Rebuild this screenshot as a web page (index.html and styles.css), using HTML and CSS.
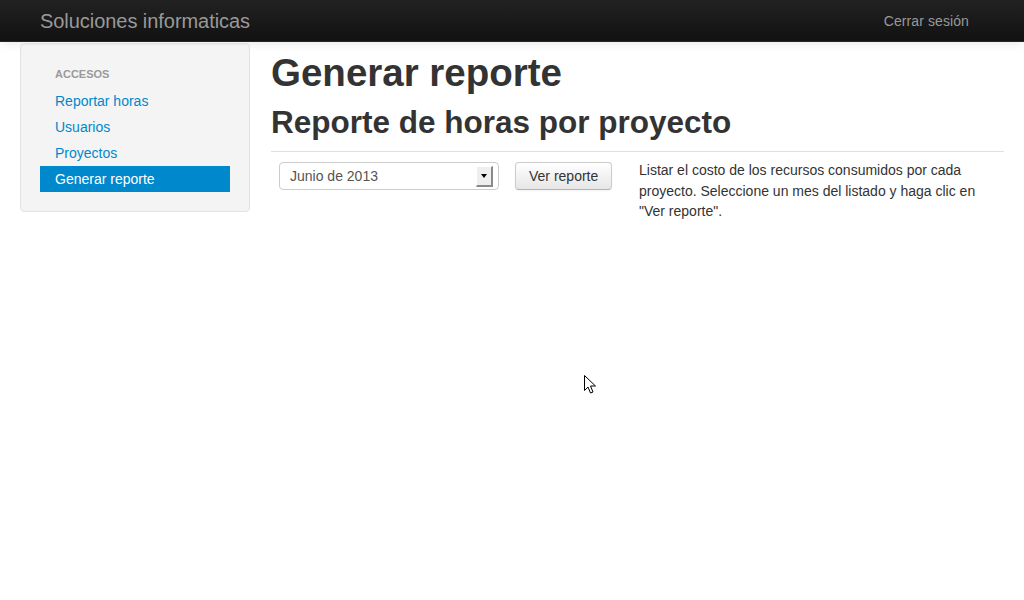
FILE: index.html
```html
<!DOCTYPE html>
<html lang="es">
<head>
<meta charset="utf-8">
<title>Generar reporte</title>
<link rel="stylesheet" href="styles.css">
</head>
<body>
<div class="navbar">
  <a class="brand" href="#">Soluciones informaticas</a>
  <a class="logout" href="#">Cerrar sesión</a>
</div>
<div class="layout">
  <aside class="well">
    <ul class="nav-list">
      <li class="nav-header">Accesos</li>
      <li><a href="#">Reportar horas</a></li>
      <li><a href="#">Usuarios</a></li>
      <li><a href="#">Proyectos</a></li>
      <li class="active"><a href="#">Generar reporte</a></li>
    </ul>
  </aside>
  <main class="content">
    <h1>Generar reporte</h1>
    <h2>Reporte de horas por proyecto</h2>
    <hr class="rule">
    <div class="report-row">
      <form class="report-form">
        <div class="select">
          <span class="select-text">Junio de 2013</span>
          <span class="select-arrow"><span class="tri"></span></span>
        </div>
        <button type="button" class="btn">Ver reporte</button>
      </form>
      <p class="help">Listar el costo de los recursos consumidos por cada proyecto. Seleccione un mes del listado y haga clic en "Ver reporte".</p>
    </div>
  </main>
</div>
<svg class="cursor" width="13" height="20" viewBox="0 0 13 20"><path d="M0.5 0.5 L0.5 15.5 L4 12 L6.5 18 L9 17 L6.5 11 L11.5 11 Z" fill="#fff" stroke="#000" stroke-width="1"/></svg>
</body>
</html>
```
FILE: styles.css
```css
* { box-sizing: border-box; }
html, body { margin: 0; padding: 0; }
body {
  font-family: "Liberation Sans", Arial, sans-serif;
  font-size: 14px;
  line-height: 20px;
  color: #333;
  background: #fff;
  width: 1024px;
  height: 600px;
  overflow: hidden;
  position: relative;
}
a { text-decoration: none; }

.navbar {
  height: 42px;
  background: linear-gradient(#222222, #111111);
  border-bottom: 1px solid #252525;
  box-shadow: 0 1px 10px rgba(0,0,0,0.1);
  display: flex;
  align-items: center;
  justify-content: space-between;
  padding: 0 55px 0 40px;
}
.brand {
  color: #999;
  font-size: 20px;
  line-height: 20px;
  font-weight: 200;
  letter-spacing: -0.05px;
}
.logout {
  color: #999;
  font-size: 14px;
  letter-spacing: 0.1px;
}

.layout {
  display: flex;
  padding: 1px 20px 0 20px;
  gap: 21px;
}
.well {
  width: 230px;
  flex: none;
  align-self: flex-start;
  background: #f4f4f4;
  border: 1px solid #e3e3e3;
  border-radius: 4px;
  box-shadow: inset 0 1px 1px rgba(0,0,0,0.05);
  padding: 19px;
}
.nav-list {
  list-style: none;
  margin: 0;
  padding: 0;
}
.nav-list li a,
.nav-header {
  display: block;
  padding: 3px 15px;
}
.nav-header {
  font-size: 11px;
  font-weight: bold;
  color: #999;
  text-transform: uppercase;
  line-height: 20px;
  text-shadow: 0 1px 0 rgba(255,255,255,0.5);
  padding-top: 1px;
  padding-bottom: 4px;
}
.nav-list li a {
  color: #0088cc;
  line-height: 20px;
}
.nav-list li.active a {
  background: #0088cc;
  color: #fff;
}

.content {
  flex: 1;
  min-width: 0;
}
h1, h2 {
  font-weight: bold;
  color: #333;
  margin: 0;
  line-height: 40px;
}
h1 {
  font-size: 38.5px;
  margin-top: 10px;
}
h2 {
  font-size: 31.5px;
  margin-top: 9px;
}
.rule {
  margin: 9px 0 0 0;
  border: 0;
  border-top: 1px solid #e0e0e0;
  height: 0;
}
.report-row {
  display: grid;
  grid-template-columns: 368px 1fr;
  margin-top: 10px;
}
.report-form {
  display: flex;
  align-items: flex-start;
  gap: 16px;
  padding-left: 8px;
  margin: 0;
}
.select {
  width: 220px;
  height: 28px;
  border: 1px solid #ccc;
  border-radius: 4px;
  background: #fff;
  display: flex;
  align-items: center;
  justify-content: space-between;
  padding: 0 5px 0 10px;
  color: #555;
}
.select-text { line-height: 20px; }
.select-arrow {
  width: 17px;
  height: 21px;
  background: #eee;
  border-right: 2px solid #8a8a8a;
  border-bottom: 2px solid #8a8a8a;
  border-top: 1px solid #fff;
  border-left: 1px solid #fff;
  display: flex;
  align-items: center;
  justify-content: center;
}
.tri {
  width: 0;
  height: 0;
  border-left: 3px solid transparent;
  border-right: 3px solid transparent;
  border-top: 4px solid #000;
}
.btn {
  font-family: "Liberation Sans", Arial, sans-serif;
  font-size: 14px;
  line-height: 20px;
  color: #333;
  height: 28px;
  padding: 0 13px;
  border: 1px solid #ccc;
  border-bottom-color: #b3b3b3;
  border-radius: 4px;
  background: linear-gradient(#ffffff, #e6e6e6);
  box-shadow: inset 0 1px 0 rgba(255,255,255,0.2), 0 1px 2px rgba(0,0,0,0.05);
}
.help {
  margin: -2px 0 0 0;
  line-height: 20.5px;
  color: #333;
}
.cursor {
  position: absolute;
  left: 584px;
  top: 375px;
}
```
